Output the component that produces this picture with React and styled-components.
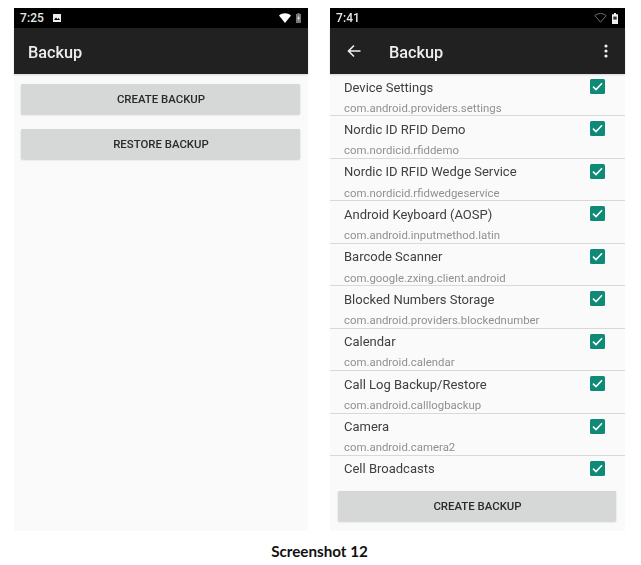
import React from "react"
import styled, { createGlobalStyle } from "styled-components"

const GlobalStyle = createGlobalStyle`
    html, body {
        margin: 0;
        padding: 0;
        background: #fff;
    }
`;

const Page = styled.div`
    width: 641px;
    height: 565px;
    overflow: hidden;
    display: flex;
    flex-direction: column;
    align-items: center;
    font-family: Roboto, "Liberation Sans", sans-serif;
`;

const Phones = styled.div`
    display: flex;
    gap: 22px;
    width: 100%;
    box-sizing: border-box;
    padding: 8px 16px 0 14px;
`;

const Phone = styled.div`
    width: ${props => props.$width}px;
    height: 523px;
    display: flex;
    flex-direction: column;
    background: #fafafa;
    filter: blur(0.35px);
`;

const StatusBar = styled.div`
    height: 20px;
    flex: none;
    display: flex;
    align-items: center;
    background: #000;
    color: #e8e8e8;
    font-size: 12px;
    padding: 0 7px 0 6px;
`;

const StatusTime = styled.span`
    font-weight: 500;
    letter-spacing: 0.1px;
`;

const StatusPicture = styled.svg`
    margin-left: 8px;
`;

const StatusIcons = styled.div`
    margin-left: auto;
    display: flex;
    align-items: center;
    gap: 5px;
`;

const Toolbar = styled.div`
    height: 46px;
    flex: none;
    display: flex;
    align-items: center;
    background: #212121;
    color: #eeeeee;
    padding: 2px 14px 0 14px;
    box-sizing: border-box;
    box-shadow: 0 1px 2px rgba(0, 0, 0, 0.15);
    position: relative;
`;

const BackIcon = styled.svg`
    margin-left: 3px;
    margin-right: 28px;
    margin-top: -3px;
`;

const ToolbarTitle = styled.div`
    font-size: 16.3px;
    font-weight: 500;
`;

const MoreIcon = styled.svg`
    margin-left: auto;
    margin-top: -3px;
    margin-right: 3px;
`;

const ActionButton = styled.div`
    height: 30px;
    flex: none;
    display: flex;
    align-items: center;
    justify-content: center;
    background: #d5d8d7;
    color: #2a2a2a;
    font-size: 11.4px;
    font-weight: 500;
    padding-left: 1px;
    border-radius: 1px;
    box-shadow: 0 1px 2px rgba(0, 0, 0, 0.18);
`;

const ButtonStack = styled.div`
    display: flex;
    flex-direction: column;
    gap: 15px;
    padding: 10px 8px 0 7px;
`;

const List = styled.div`
    height: 409px;
    flex: none;
    overflow: hidden;
`;

const Row = styled.div`
    height: 42.44px;
    box-sizing: border-box;
    position: relative;
    padding: 0 20px 0 14px;
    border-bottom: 1px solid ${props => (props.$last ? "transparent" : "#d9d9d9")};
`;

const RowName = styled.div`
    position: absolute;
    left: 14px;
    top: 4.5px;
    line-height: 17px;
    font-size: 13px;
    color: #404040;
`;

const RowPackage = styled.div`
    position: absolute;
    left: 14px;
    top: 26.8px;
    line-height: 14px;
    font-size: 11.4px;
    color: #909090;
    white-space: nowrap;
`;

const Check = styled.div`
    position: absolute;
    left: 260px;
    top: 5px;
    width: 15px;
    height: 15px;
    border-radius: 1.5px;
    background: #0f8a76;
    display: flex;
    align-items: center;
    justify-content: center;
`;

const FooterButton = styled.div`
    padding: 8px 9px 0 8px;
`;

const Caption = styled.div`
    margin-top: 12px;
    font-family: Lato, "Liberation Sans", sans-serif;
    font-weight: 700;
    font-size: 15.2px;
    line-height: 17px;
    color: #111;
    margin-right: 2px;
`;

const apps = [
    ["Device Settings", "com.android.providers.settings"],
    ["Nordic ID RFID Demo", "com.nordicid.rfiddemo"],
    ["Nordic ID RFID Wedge Service", "com.nordicid.rfidwedgeservice"],
    ["Android Keyboard (AOSP)", "com.android.inputmethod.latin"],
    ["Barcode Scanner", "com.google.zxing.client.android"],
    ["Blocked Numbers Storage", "com.android.providers.blockednumber"],
    ["Calendar", "com.android.calendar"],
    ["Call Log Backup/Restore", "com.android.calllogbackup"],
    ["Camera", "com.android.camera2"],
    ["Cell Broadcasts", ""],
];

const App = () => (
    <Page>
        <GlobalStyle />
        <Phones>
            <Phone $width={294}>
                <StatusBar>
                    <StatusTime>7:25</StatusTime>
                    <StatusPicture width="10" height="10" viewBox="0 0 10 10">
                        <path d="M1 1h8v8H1z" fill="#eee" />
                        <path d="M2 7l2-2.4 1.5 1.6L6.6 5 8 7z" fill="#000" />
                    </StatusPicture>
                    <StatusIcons>
                        <svg width="12" height="10" viewBox="0 0 12 10">
                            <path d="M0 2.4C3.4-.6 8.6-.6 12 2.4L6 10z" fill="#fff" />
                        </svg>
                        <svg width="5" height="10" viewBox="0 0 5 10">
                            <path d="M1.5 0h2v1H5v9H0V1h1.5z" fill="#777" />
                            <path d="M3 2L1.2 5.8h1.3L2 8.5 3.9 4.6H2.6z" fill="#eee" />
                        </svg>
                    </StatusIcons>
                </StatusBar>
                <Toolbar>
                    <ToolbarTitle>Backup</ToolbarTitle>
                </Toolbar>
                <ButtonStack>
                    <ActionButton>CREATE BACKUP</ActionButton>
                    <ActionButton>RESTORE BACKUP</ActionButton>
                </ButtonStack>
            </Phone>
            <Phone $width={295}>
                <StatusBar>
                    <StatusTime>7:41</StatusTime>
                    <StatusIcons>
                        <svg width="13" height="10" viewBox="0 0 13 10">
                            <path d="M.8 2.6C4-.2 9-.2 12.2 2.6L6.5 9.2z" fill="none" stroke="#777" strokeWidth="0.9" />
                        </svg>
                        <svg width="6" height="11" viewBox="0 0 6 11">
                            <path d="M2 0h2v1.2h2V11H0V1.2h2z" fill="#f0f0f0" />
                            <path d="M1.3 3.6h3.4v3H1.3z" fill="#333" />
                        </svg>
                    </StatusIcons>
                </StatusBar>
                <Toolbar>
                    <BackIcon width="14" height="14" viewBox="0 0 14 14">
                        <path d="M13.5 7H1.5M7 1.5L1.5 7 7 12.5" fill="none" stroke="#f0f0f0" strokeWidth="1.6" />
                    </BackIcon>
                    <ToolbarTitle>Backup</ToolbarTitle>
                    <MoreIcon width="4" height="14" viewBox="0 0 4 14">
                        <circle cx="2" cy="2" r="1.6" fill="#f0f0f0" />
                        <circle cx="2" cy="7" r="1.6" fill="#f0f0f0" />
                        <circle cx="2" cy="12" r="1.6" fill="#f0f0f0" />
                    </MoreIcon>
                </Toolbar>
                <List>
                    {apps.map(([name, pkg], i) => (
                        <Row key={name} $last={i === apps.length - 1}>
                            <RowName>{name}</RowName>
                            <RowPackage>{pkg}</RowPackage>
                            <Check>
                                <svg width="11" height="9" viewBox="0 0 11 9">
                                    <path d="M1 4.6l3 3 6-6.4" fill="none" stroke="#fff" strokeWidth="1.5" />
                                </svg>
                            </Check>
                        </Row>
                    ))}
                </List>
                <FooterButton>
                    <ActionButton>CREATE BACKUP</ActionButton>
                </FooterButton>
            </Phone>
        </Phones>
        <Caption>Screenshot 12</Caption>
    </Page>
);

export default App;
